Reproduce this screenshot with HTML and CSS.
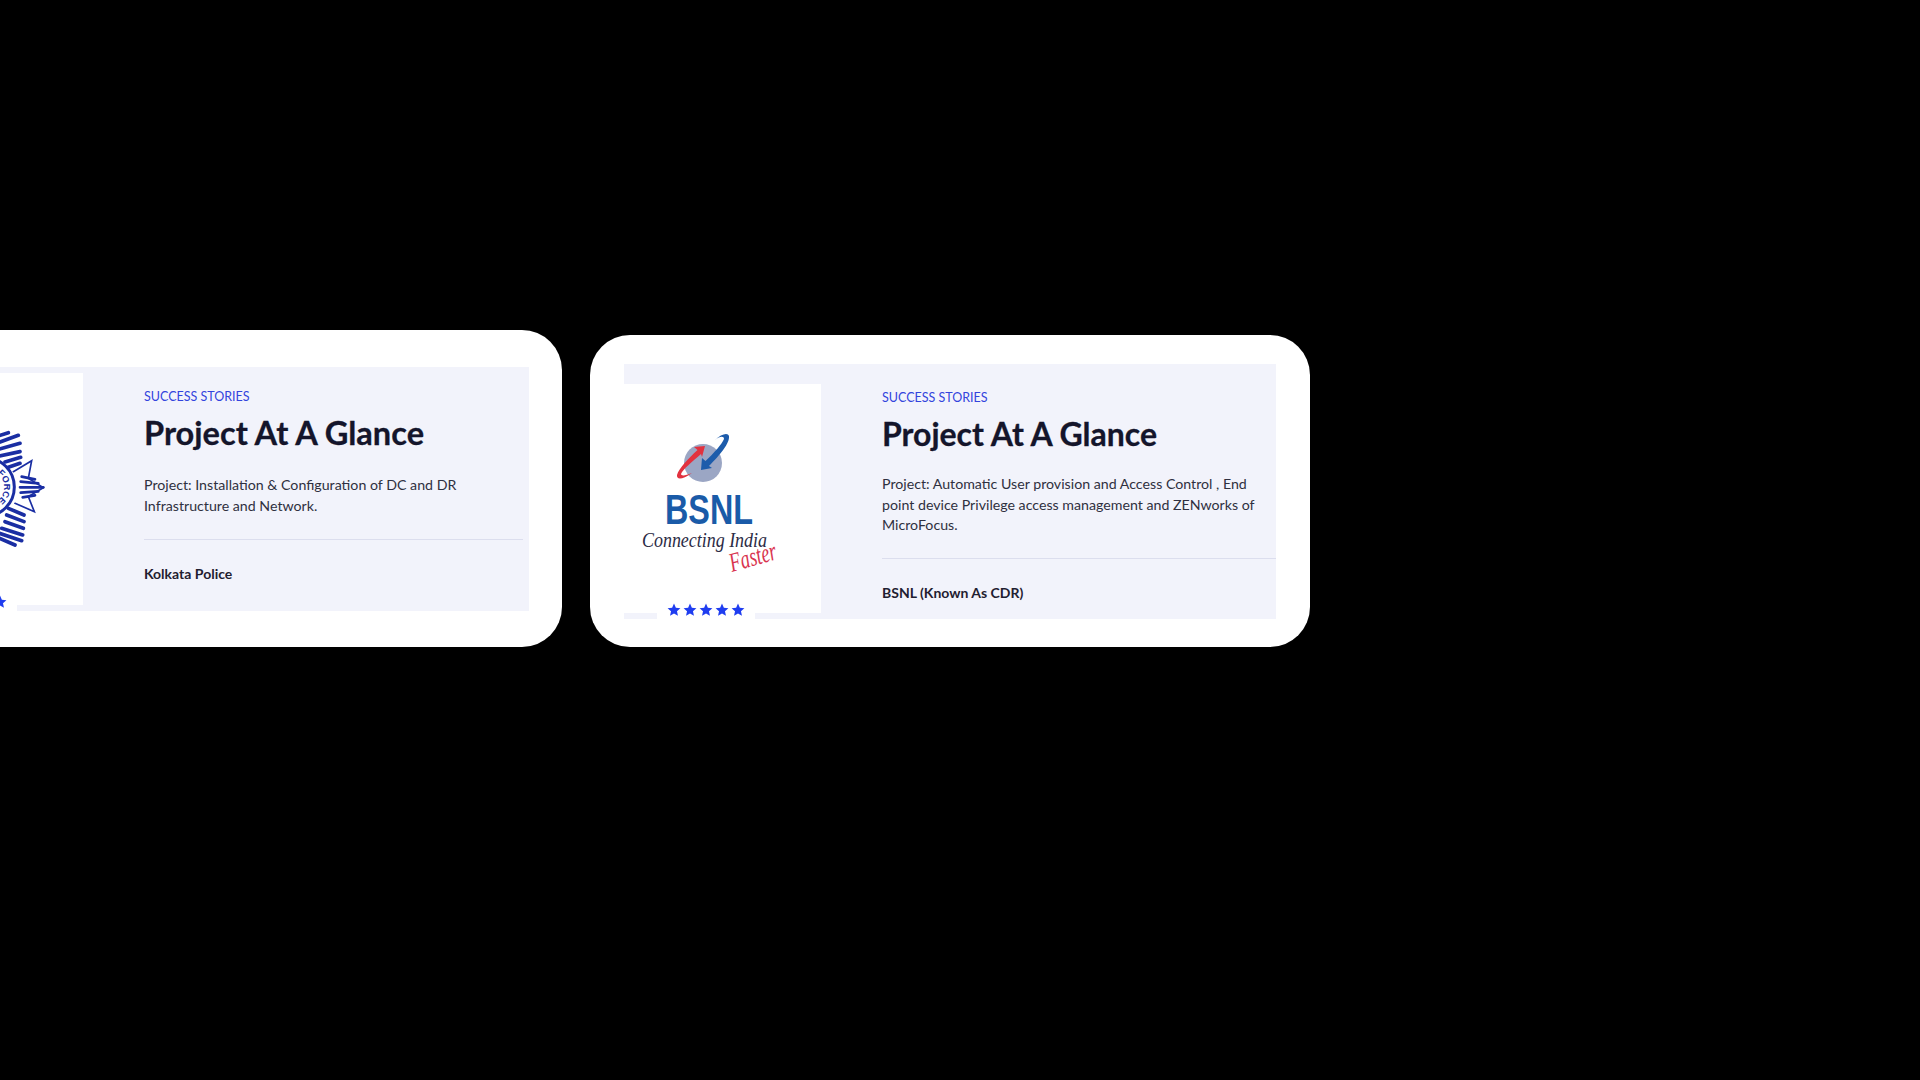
FILE: index.html
```html
<!DOCTYPE html>
<html lang="en">
<head>
    <meta charset="UTF-8">
    <meta name="viewport" content="width=device-width, initial-scale=1.0">
    <title>Success Stories</title>
    <link rel="stylesheet" href="styles.css">
</head>
<body>
    <div class="slider">
        <div class="card card-police">
            <div class="panel">
                <div class="client-logo">
                    <svg class="logo-art" viewBox="0 0 197 232">
                        <g transform="translate(114 47) scale(0.3333)" fill="none" stroke="#1a2ea3" stroke-linecap="round">
                            <circle cx="-45" cy="201" r="88" stroke-width="9"/>
                            <g stroke-width="11">
                                <path d="M-6 48L25 38M-6 68L55 46M-6 88L60 70M-2 108L60 95M15 126L62 112M25 142L60 130"/>
                                <path d="M25 265L72 285M20 285L72 305M15 305L70 325M5 325L68 345M-2 340L65 362M-8 352L45 375"/>
                                <path d="M65 170L105 178M62 185L115 190M60 202L130 202M62 218L115 214M68 232L105 226" stroke-width="8"/>
                            </g>
                            <path d="M40 155L95 122L85 175L130 203L85 230L103 275L45 250" stroke-width="5" stroke-linejoin="miter"/>
                            <path id="forceArc" d="M-10 159A50 50 0 0 1 -10 243" stroke="none"/>
                            <text class="force-text"><textPath href="#forceArc" startOffset="50%" text-anchor="middle">FORCE</textPath></text>
                        </g>
                    </svg>
                    <div class="stars">
                        <svg viewBox="0 0 24 24"><path d="M12 1l3.2 7.2 7.8.8-5.9 5.2 1.7 7.8L12 18l-6.8 4 1.7-7.8L1 9l7.8-.8z"/></svg>
                        <svg viewBox="0 0 24 24"><path d="M12 1l3.2 7.2 7.8.8-5.9 5.2 1.7 7.8L12 18l-6.8 4 1.7-7.8L1 9l7.8-.8z"/></svg>
                        <svg viewBox="0 0 24 24"><path d="M12 1l3.2 7.2 7.8.8-5.9 5.2 1.7 7.8L12 18l-6.8 4 1.7-7.8L1 9l7.8-.8z"/></svg>
                        <svg viewBox="0 0 24 24"><path d="M12 1l3.2 7.2 7.8.8-5.9 5.2 1.7 7.8L12 18l-6.8 4 1.7-7.8L1 9l7.8-.8z"/></svg>
                        <svg viewBox="0 0 24 24"><path d="M12 1l3.2 7.2 7.8.8-5.9 5.2 1.7 7.8L12 18l-6.8 4 1.7-7.8L1 9l7.8-.8z"/></svg>
                    </div>
                </div>
                <div class="story">
                    <p class="eyebrow">SUCCESS STORIES</p>
                    <h2>Project At A Glance</h2>
                    <p class="summary">Project: Installation &amp; Configuration of DC and DR<br>Infrastructure and Network.</p>
                    <hr>
                    <p class="client-name">Kolkata Police</p>
                </div>
            </div>
        </div>

        <div class="card card-bsnl">
            <div class="panel">
                <div class="client-logo">
                    <svg class="logo-art" viewBox="0 0 197 229">
                        <circle cx="79" cy="79" r="19" fill="#9ba6c4"/>
                        <!-- swooshes -->
                        <path d="M81 62L70 63L73.5 66C64 75 55 84 53 91C52.5 96 58 96 68 89C61 92 57 92 57 90C59 85 68 78 77 70L78 73Z" fill="#e2323f"/>
                        <path d="M77 86L78 74L81.5 77C90 69 98 60 100 55C100 52 96 52 91 56C97 50 104 48 105 52C106 59 96 71 85 82L88 84Z" fill="#1d5cab"/>
                        <text class="bsnl-mark" x="41" y="140" textLength="88" lengthAdjust="spacingAndGlyphs">BSNL</text>
                        <text class="bsnl-tagline" x="18" y="163" textLength="125" lengthAdjust="spacingAndGlyphs">Connecting India</text>
                        <text class="bsnl-faster" transform="translate(108 188) rotate(-16)" textLength="48" lengthAdjust="spacingAndGlyphs">Faster</text>
                    </svg>
                    <div class="stars">
                        <svg viewBox="0 0 24 24"><path d="M12 1l3.2 7.2 7.8.8-5.9 5.2 1.7 7.8L12 18l-6.8 4 1.7-7.8L1 9l7.8-.8z"/></svg>
                        <svg viewBox="0 0 24 24"><path d="M12 1l3.2 7.2 7.8.8-5.9 5.2 1.7 7.8L12 18l-6.8 4 1.7-7.8L1 9l7.8-.8z"/></svg>
                        <svg viewBox="0 0 24 24"><path d="M12 1l3.2 7.2 7.8.8-5.9 5.2 1.7 7.8L12 18l-6.8 4 1.7-7.8L1 9l7.8-.8z"/></svg>
                        <svg viewBox="0 0 24 24"><path d="M12 1l3.2 7.2 7.8.8-5.9 5.2 1.7 7.8L12 18l-6.8 4 1.7-7.8L1 9l7.8-.8z"/></svg>
                        <svg viewBox="0 0 24 24"><path d="M12 1l3.2 7.2 7.8.8-5.9 5.2 1.7 7.8L12 18l-6.8 4 1.7-7.8L1 9l7.8-.8z"/></svg>
                    </div>
                </div>
                <div class="story">
                    <p class="eyebrow">SUCCESS STORIES</p>
                    <h2>Project At A Glance</h2>
                    <p class="summary">Project: Automatic User provision and Access Control , End<br>point device Privilege access management and ZENworks of<br>MicroFocus.</p>
                    <hr>
                    <p class="client-name">BSNL (Known As CDR)</p>
                </div>
            </div>
        </div>
    </div>
</body>
</html>
```

FILE: styles.css
```css
html, body {
    height: 100%;
}

body {
    margin: 0;
    background: #000;
    font-family: Lato, "Open Sans", sans-serif;
    overflow: hidden;
}

.slider {
    display: flex;
    align-items: flex-end;
    gap: 28px;
    margin-left: -148px;
    padding-top: 330px;
}

.card {
    flex: none;
    box-sizing: border-box;
    background: #fff;
    border-radius: 40px;
}

.card-police {
    width: 710px;
    padding: 37px 33px 36px 34px;
}

.card-bsnl {
    width: 720px;
    padding: 29px 34px 28px;
}

.panel {
    display: flex;
    gap: 61px;
    background: #f2f3fb;
}

.client-logo {
    flex: none;
    position: relative;
    width: 197px;
    background: #fff;
}

.card-police .client-logo {
    height: 232px;
    margin: 6px 0;
}

.card-bsnl .client-logo {
    height: 229px;
    margin: 20px 0 6px;
}

.logo-art {
    display: block;
    width: 100%;
    height: 100%;
}

/* white tab that sits over the bottom edge of the logo */
.stars {
    position: absolute;
    left: 33px;
    bottom: -6px;
    display: flex;
    justify-content: center;
    gap: 2px;
    box-sizing: border-box;
    width: 98px;
    height: 18px;
    padding-top: 2px;
    background: #fff;
    border-radius: 6px 6px 0 0;
}

.stars svg {
    width: 14px;
    height: 14px;
    fill: #1f3df0;
}

.story {
    flex: 1;
    min-width: 0;
}

.card-police .story {
    padding: 21px 6px 0 0;
}

.card-bsnl .story {
    padding-top: 25px;
}

.eyebrow {
    margin: 0;
    font-size: 12.5px;
    line-height: 18px;
    color: #3344dd;
}

h2 {
    margin: 7px 0 0;
    font-size: 32px;
    font-weight: 700;
    line-height: 40px;
    color: #14152b;
    -webkit-text-stroke: 0.3px #14152b;
}

.summary {
    margin: 20px 0 0;
    font-size: 14.2px;
    line-height: 20.5px;
    color: #2f3040;
}

.card-police h2 {
    font-size: 32.6px;
}

.card-police .summary {
    margin-top: 21px;
    line-height: 21px;
}

hr {
    height: 1px;
    margin: 22px 0 0;
    border: 0;
    background: #dcdeee;
}

.client-name {
    margin: 24px 0 0;
    font-size: 14px;
    font-weight: 700;
    line-height: 20px;
    color: #1f2030;
}

.card-police hr {
    margin-top: 23px;
}

.card-police .client-name {
    margin-top: 24px;
}

.force-text {
    font-family: "Liberation Sans", sans-serif;
    font-size: 27px;
    font-weight: 700;
    stroke: none;
    fill: #1a2ea3;
}

.bsnl-mark {
    font-family: "Liberation Sans", sans-serif;
    font-size: 43px;
    font-weight: 700;
    fill: #1a5ba8;
}

.bsnl-tagline {
    font-family: "Liberation Serif", serif;
    font-size: 20px;
    font-style: italic;
    fill: #2b2b45;
}

.bsnl-faster {
    font-family: "Liberation Serif", serif;
    font-size: 27px;
    font-style: italic;
    fill: #d9344f;
}
```
